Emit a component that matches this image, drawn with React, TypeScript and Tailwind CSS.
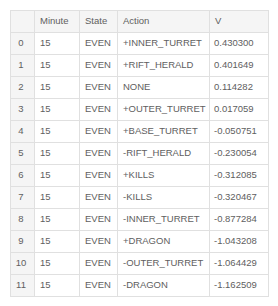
import React from "react";

const rows: [string, string, string, string][] = [
  ["15", "EVEN", "+INNER_TURRET", "0.430300"],
  ["15", "EVEN", "+RIFT_HERALD", "0.401649"],
  ["15", "EVEN", "NONE", "0.114282"],
  ["15", "EVEN", "+OUTER_TURRET", "0.017059"],
  ["15", "EVEN", "+BASE_TURRET", "-0.050751"],
  ["15", "EVEN", "-RIFT_HERALD", "-0.230054"],
  ["15", "EVEN", "+KILLS", "-0.312085"],
  ["15", "EVEN", "-KILLS", "-0.320467"],
  ["15", "EVEN", "-INNER_TURRET", "-0.877284"],
  ["15", "EVEN", "+DRAGON", "-1.043208"],
  ["15", "EVEN", "-OUTER_TURRET", "-1.064429"],
  ["15", "EVEN", "-DRAGON", "-1.162509"],
];

export default function App() {
  return (
    <div className="w-[278px] h-[306px] bg-white p-[10px]" style={{ fontFamily: '"Liberation Sans", Arial, sans-serif' }}>
      <table className="table-fixed border-collapse w-[258px] text-[9.5px] text-[#606060]">
        <colgroup>
          <col className="w-[24px]" />
          <col className="w-[45px]" />
          <col className="w-[38px]" />
          <col className="w-[92px]" />
          <col className="w-[59px]" />
        </colgroup>
        <thead>
          <tr className="h-[22px] bg-[#f5f5f5]">
            <th className="border border-[#e0e0e0] font-normal"></th>
            <th className="border border-[#e0e0e0] font-normal text-left pl-[5px]">Minute</th>
            <th className="border border-[#e0e0e0] font-normal text-left pl-[5px]">State</th>
            <th className="border border-[#e0e0e0] font-normal text-left pl-[5px]">Action</th>
            <th className="border border-[#e0e0e0] font-normal text-left pl-[5px]">V</th>
          </tr>
        </thead>
        <tbody>
          {rows.map((r, i) => (
            <tr key={i} className="h-[22px]">
              <td className="border border-[#e0e0e0] bg-[#f5f5f5] text-center pr-[3px]">{i}</td>
              <td className="border border-[#e0e0e0] pl-[5px]">{r[0]}</td>
              <td className="border border-[#e0e0e0] pl-[5px]">{r[1]}</td>
              <td className="border border-[#e0e0e0] pl-[5px] whitespace-nowrap overflow-hidden">{r[2]}</td>
              <td className="border border-[#e0e0e0] pl-[4px] whitespace-nowrap">{r[3]}</td>
            </tr>
          ))}
        </tbody>
      </table>
    </div>
  );
}
